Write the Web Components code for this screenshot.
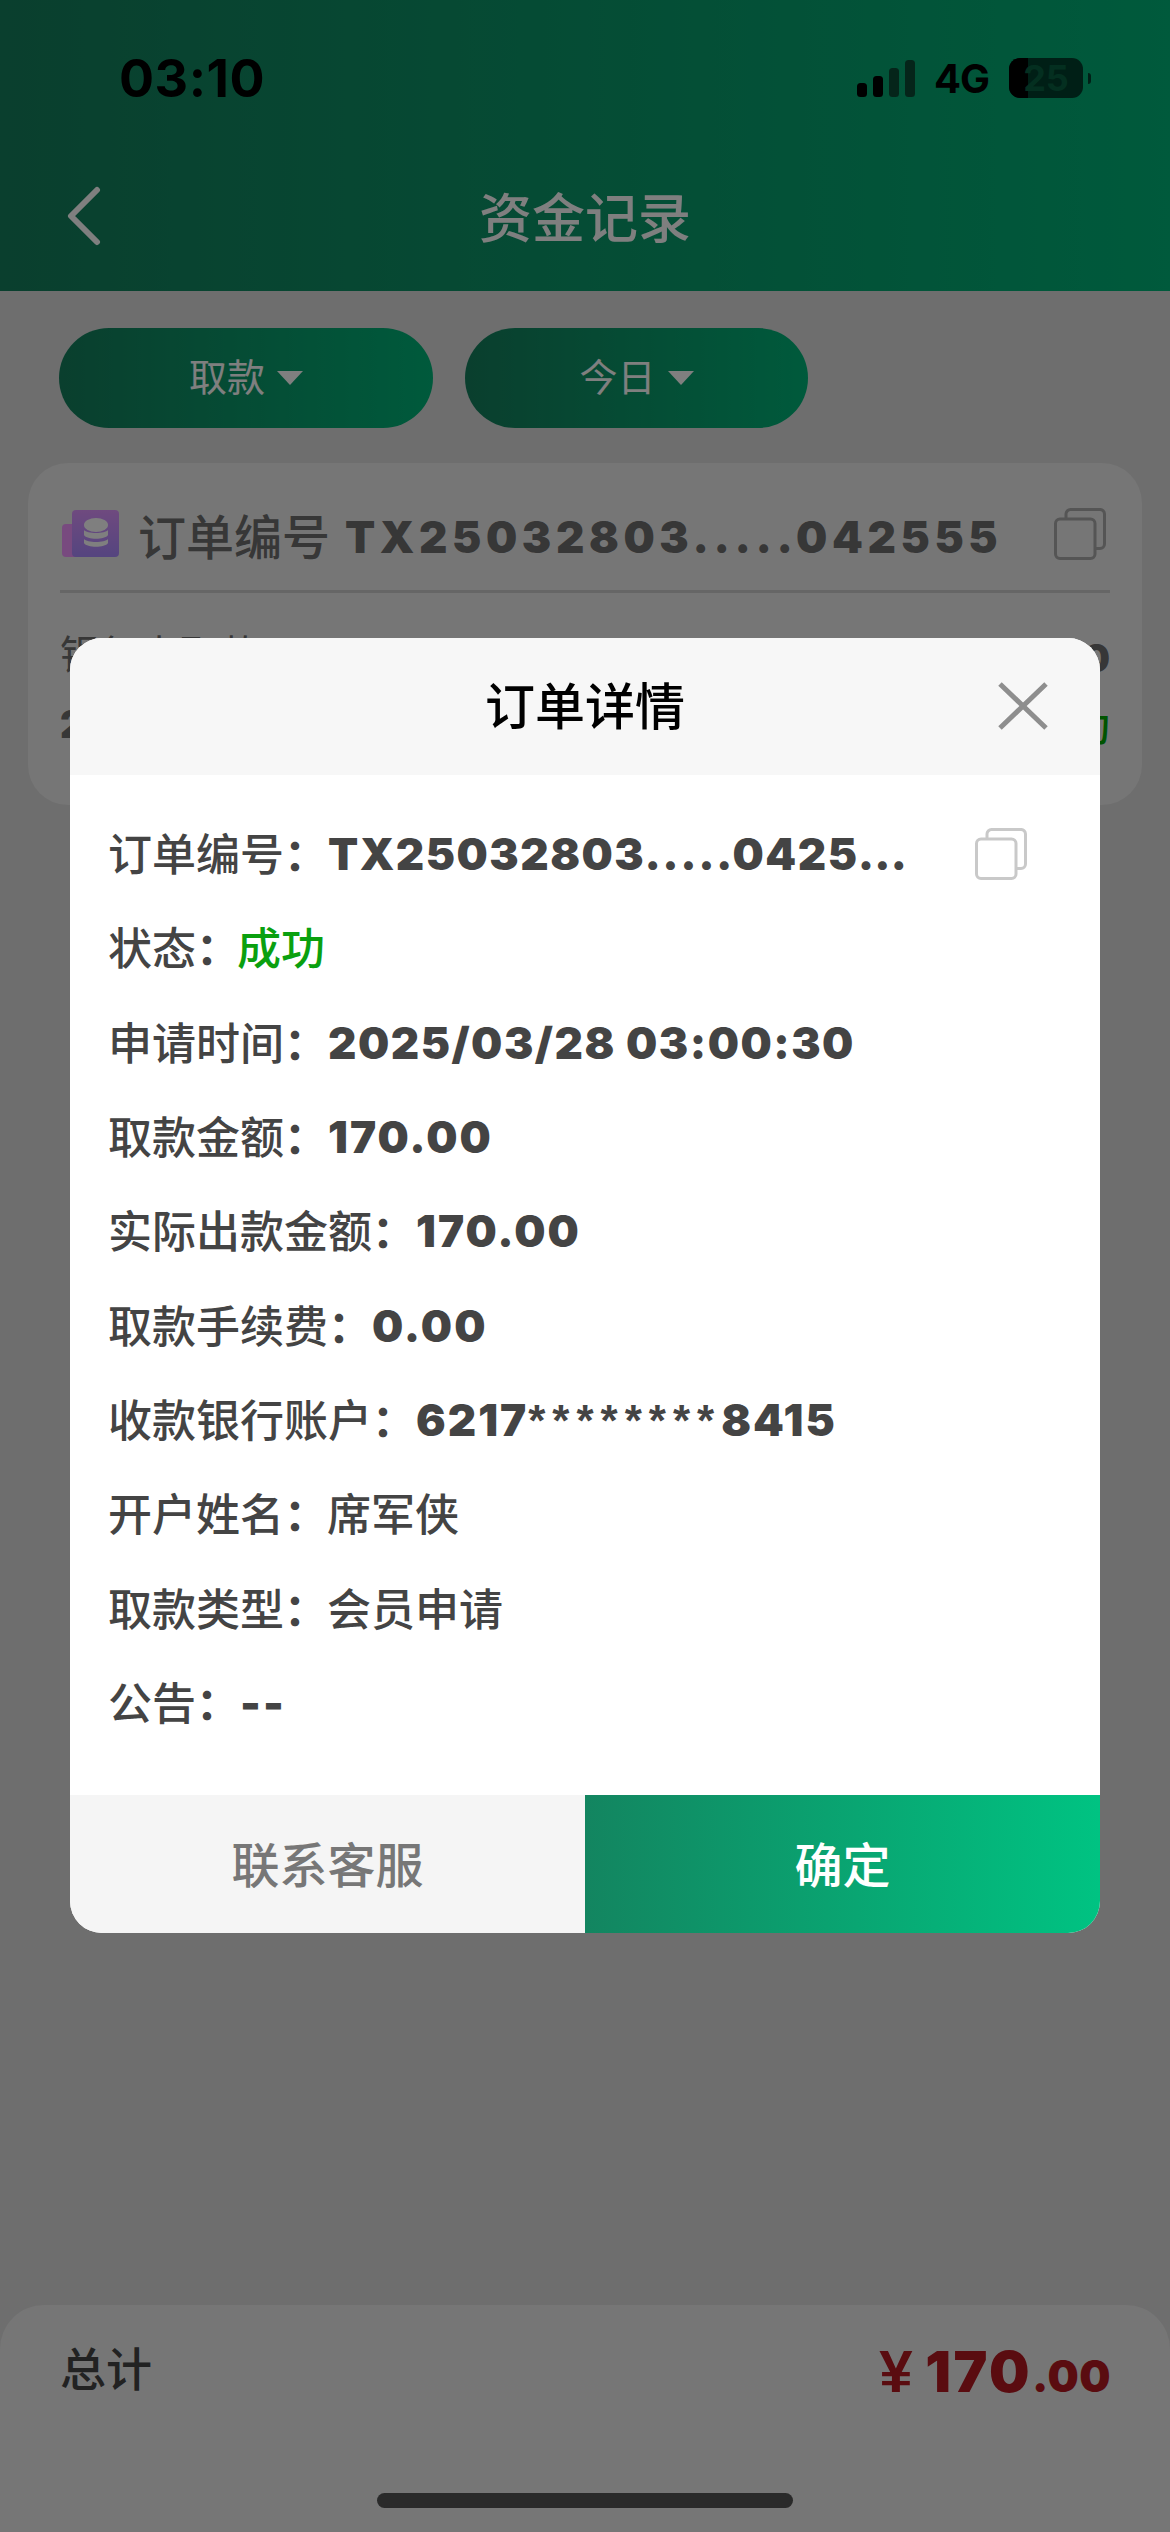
<!DOCTYPE html>
<html lang="zh">
<head>
<meta charset="utf-8">
<title>资金记录</title>
<style>
  html, body { margin: 0; padding: 0; background: #dcdcdc; }
  body { width: 1170px; height: 2532px; font-family: Inter, "Noto Sans CJK SC", sans-serif; }
</style>
</head>
<body>
<x-page>
  <x-statusbar slot="bar"></x-statusbar>
  <x-navbar slot="bar">资金记录</x-navbar>
  <x-filter slot="filters" style="width:374px">取款</x-filter>
  <x-filter slot="filters" style="width:343px">今日</x-filter>
  <x-order-card slot="list"></x-order-card>
  <x-total slot="total"></x-total>
  <x-order-dialog slot="dialog">
    <x-row label="订单编号" value="TX25032803.....0425…" track="1.500" copy></x-row>
    <x-row label="状态" value="成功" kind="ok"></x-row>
    <x-row label="申请时间" value="2025/03/28 03:00:30" track="1.500"></x-row>
    <x-row label="取款金额" value="170.00"></x-row>
    <x-row label="实际出款金额" value="170.00"></x-row>
    <x-row label="取款手续费" value="0.00"></x-row>
    <x-row label="收款银行账户" value="6217********8415"></x-row>
    <x-row label="开户姓名" value="席军侠" kind="plain"></x-row>
    <x-row label="取款类型" value="会员申请" kind="plain"></x-row>
    <x-row label="公告" value="--"></x-row>
  </x-order-dialog>
</x-page>

<script>
const COPY_ICON = (color) => `
  <svg width="52" height="52" viewBox="0 0 52 52" fill="none" stroke="${color}" stroke-width="3">
    <path d="M12 11V6a4.500 4.500 0 0 1 4.500-4.500h29A4.500 4.500 0 0 1 50.500 6v30a4.500 4.500 0 0 1-4.500 4.500h-5"/>
    <rect x="1.500" y="11" width="39.500" height="39.500" rx="4.500"/>
  </svg>`;

class XPage extends HTMLElement {
  constructor() {
    super();
    this.attachShadow({ mode: 'open' });
    this.shadowRoot.innerHTML = `
      <style>
        :host { display: block; position: relative; width: 1170px; height: 2532px; overflow: hidden; background: #dcdcdc; }
        .top { display: block; height: 291px; background: linear-gradient(90deg, #147e5c, #00b478); }
        .filters { display: flex; gap: 32px; padding: 37px 59px 35px; }
        .list { padding: 0 28px; }
        .bottom { position: absolute; left: 0; right: 0; bottom: 0; }
        .scrim { position: absolute; inset: 0; background: rgba(0, 0, 0, .5); }
        .dialog { position: absolute; left: 70px; top: 638px; }
      </style>
      <div class="top"><slot name="bar"></slot></div>
      <div class="filters"><slot name="filters"></slot></div>
      <div class="list"><slot name="list"></slot></div>
      <div class="bottom"><slot name="total"></slot></div>
      <div class="scrim"></div>
      <div class="dialog"><slot name="dialog"></slot></div>`;
  }
}

class XStatusbar extends HTMLElement {
  constructor() {
    super();
    this.attachShadow({ mode: 'open' });
    this.shadowRoot.innerHTML = `
      <style>
        :host { display: flex; align-items: center; justify-content: space-between; height: 156px; padding: 0 79px 0 119px; box-sizing: border-box; color: #000; font-family: Inter, "Liberation Sans", sans-serif; }
        .time { font-size: 52px; font-weight: 700; letter-spacing: .5px; }
        .right { display: flex; align-items: center; }
        .net { font-size: 40px; font-weight: 700; margin: 0 20px 0 19px; letter-spacing: -1px; }
        .battery { position: relative; width: 74px; height: 40px; border-radius: 11px; background: #003f2c; text-align: center; color: #085f41; font-size: 36px; font-weight: 700; line-height: 40px; }
        .battery i { position: absolute; left: 0; top: 0; bottom: 0; width: 19px; background: #000; border-radius: 11px 0 0 11px; }
        .battery span { position: relative; }
        .cap { width: 3px; height: 11px; background: #003f2c; border-radius: 0 4px 4px 0; margin-left: 5px; }
      </style>
      <div class="time">03:10</div>
      <div class="right">
        <svg width="58" height="37" viewBox="0 0 58 37">
          <rect x="0" y="23" width="10" height="14" rx="3.500" fill="#000"/>
          <rect x="16" y="16" width="10" height="21" rx="3.500" fill="#000"/>
          <rect x="32" y="8" width="10" height="29" rx="3.500" fill="#0a4a35"/>
          <rect x="48" y="0" width="10" height="37" rx="3.500" fill="#0a4a35"/>
        </svg>
        <div class="net">4G</div>
        <div class="battery"><i></i><span>25</span></div>
        <div class="cap"></div>
      </div>`;
  }
}

class XNavbar extends HTMLElement {
  constructor() {
    super();
    this.attachShadow({ mode: 'open' });
    this.shadowRoot.innerHTML = `
      <style>
        :host { display: flex; align-items: center; justify-content: center; position: relative; height: 135px; padding-bottom: 18px; box-sizing: border-box; color: #fff; font-size: 53px; font-weight: 500; font-family: "Noto Sans CJK SC", sans-serif; }
        svg { position: absolute; left: 66px; top: 30px; }
      </style>
      <svg width="36" height="60" viewBox="0 0 36 60" fill="none" stroke="#fff" stroke-width="6" stroke-linecap="round" stroke-linejoin="round">
        <path d="M31 4 5 30l26 26"/>
      </svg>
      <slot></slot>`;
  }
}

class XFilter extends HTMLElement {
  constructor() {
    super();
    this.attachShadow({ mode: 'open' });
    this.shadowRoot.innerHTML = `
      <style>
        :host { display: flex; align-items: center; justify-content: center; gap: 12px; height: 100px; box-sizing: border-box; border-radius: 50px; background: linear-gradient(90deg, #147e5c, #00b478); color: #fff; font-size: 38px; font-family: "Noto Sans CJK SC", sans-serif; }
        .text { margin-top: -8px; }
        .arrow { width: 0; height: 0; border-left: 13px solid transparent; border-right: 13px solid transparent; border-top: 14px solid #fff; }
      </style>
      <span class="text"><slot></slot></span><span class="arrow"></span>`;
  }
}

class XOrderCard extends HTMLElement {
  constructor() {
    super();
    this.attachShadow({ mode: 'open' });
    this.shadowRoot.innerHTML = `
      <style>
        :host { display: block; height: 342px; box-sizing: border-box; background: #ececec; border-radius: 40px; padding: 0 32px; color: #6e6e6e; font-family: "Noto Sans CJK SC", sans-serif; }
        .head { display: flex; align-items: center; height: 130px; padding-top: 14px; box-sizing: border-box; border-bottom: 3px solid #ccc; }
        .logo { margin: 0 18px 0 2px; }
        .label { font-size: 48px; font-weight: 500; margin-top: 0; }
        .no { font-family: Inter, sans-serif; font-size: 44px; font-weight: 900; letter-spacing: 4.600px; margin-left: 15px; margin-top: 6px; flex: 1; }
        .copy { margin-right: 4px; display: flex; }
        .sub { display: flex; justify-content: space-between; font-size: 40px; padding-top: 30px; }
        .amount { margin-top: 12px; }
        .amount, .date { font-family: Inter, sans-serif; font-weight: 900; font-size: 38px; }
        .sub2 { display: flex; justify-content: space-between; align-items: center; padding-top: 14px; }
        .ok { color: #00a800; font-size: 40px; font-weight: 500; }
      </style>
      <div class="head">
        <svg class="logo" width="58" height="47" viewBox="0 0 58 47">
          <rect x="0" y="14" width="26" height="33" rx="4" fill="#f094ff"/>
          <defs><linearGradient id="g" x1="0" y1="0" x2="0" y2="1"><stop offset="0" stop-color="#de94ff"/><stop offset="1" stop-color="#aa8aff"/></linearGradient></defs>
          <rect x="10" y="0" width="47" height="47" rx="4" fill="url(#g)"/>
          <g fill="#fff">
            <ellipse cx="34" cy="15" rx="12" ry="7"/>
            <path d="M22 20c3 4 21 4 24 0v5c-3 5-21 5-24 0zM22 29c3 4 21 4 24 0v4c-3 5-21 5-24 0z"/>
          </g>
        </svg>
        <span class="label">订单编号</span>
        <span class="no">TX25032803.....042555</span>
        <span class="copy">${COPY_ICON('#aaa')}</span>
      </div>
      <div class="sub"><span>银行卡取款</span><span class="amount">170.00</span></div>
      <div class="sub2"><span class="date">2025/03/28 03:00:30</span><span class="ok">成功</span></div>`;
  }
}

class XTotal extends HTMLElement {
  constructor() {
    super();
    this.attachShadow({ mode: 'open' });
    this.shadowRoot.innerHTML = `
      <style>
        :host { display: flex; justify-content: space-between; align-items: flex-start; position: relative; height: 227px; box-sizing: border-box; padding: 31px 59px 31px 60px; background: #ececec; border-radius: 44px 44px 0 0; font-family: "Noto Sans CJK SC", sans-serif; }
        .label { font-size: 46px; color: #444; font-weight: 500; line-height: 60px; }
        .sum { color: #b41820; font-family: Inter, sans-serif; font-weight: 900; font-size: 57px; line-height: 60px; letter-spacing: 2.500px; display: flex; align-items: baseline; margin-top: 6px; }
        .yen { font-family: "Liberation Sans", sans-serif; font-size: 60px; font-weight: 700; margin-right: 10px; }
        .dec { font-size: 44px; letter-spacing: .5px; }
        .home { position: absolute; left: 377px; top: 188px; width: 416px; height: 15px; border-radius: 8px; background: #545454; }
      </style>
      <span class="label">总计</span>
      <span class="sum"><span class="yen">¥</span>170<span class="dec">.00</span></span>
      <div class="home"></div>`;
  }
}

class XRow extends HTMLElement {
  constructor() {
    super();
    this.attachShadow({ mode: 'open' });
  }
  connectedCallback() {
    const kind = this.getAttribute('kind') || '';
    const track = this.getAttribute('track') || '2';
    const copy = this.hasAttribute('copy') ? `<span class="copy">${COPY_ICON('#c9c9c9')}</span>` : '';
    const value = this.getAttribute('value').replace(/\*+/, '<span class="stars">$&</span>');
    this.shadowRoot.innerHTML = `
      <style>
        :host { display: flex; align-items: center; height: 94.3px; color: #444; font-size: 44px; font-weight: 500; font-family: "Noto Sans CJK SC", sans-serif; position: relative; }
        .label { margin-top: -4px; }
        .colon { font-family: "Noto Sans CJK TC", sans-serif; font-weight: 700; }
        .val { font-family: Inter, "Noto Sans CJK SC", sans-serif; font-weight: 900; letter-spacing: ${track}px; }
        .val.ok, .val.plain { font-family: "Noto Sans CJK SC", sans-serif; font-weight: 500; letter-spacing: 0; margin-top: -4px; }
        .val.ok { color: #0aa00f; margin-left: -3px; }
        .val.plain { margin-left: -1px; }
        .stars { font-family: "Liberation Sans", sans-serif; font-weight: 700; letter-spacing: 7px; }
        .copy { position: absolute; left: 867px; top: 21px; display: flex; }
      </style>
      <span class="label">${this.getAttribute('label')}<span class="colon">：</span></span><span class="val ${kind}">${value}</span>${copy}`;
  }
}

class XOrderDialog extends HTMLElement {
  constructor() {
    super();
    this.attachShadow({ mode: 'open' });
    this.shadowRoot.innerHTML = `
      <style>
        :host { display: block; width: 1030px; height: 1295px; background: #fff; border-radius: 32px; overflow: hidden; font-family: "Noto Sans CJK SC", sans-serif; }
        .head { display: flex; align-items: center; justify-content: center; position: relative; height: 137px; padding-bottom: 8px; box-sizing: border-box; background: #f7f7f7; font-size: 50px; font-weight: 500; color: #000; }
        .head svg { position: absolute; right: 52px; top: 43px; }
        .rows { display: block; height: 1020px; box-sizing: border-box; padding: 32px 38px 0; }
        .foot { display: flex; height: 138px; font-size: 48px; font-weight: 500; }
        .foot div { flex: 1; display: flex; align-items: center; justify-content: center; padding-bottom: 4px; }
        .cancel { background: #f5f5f5; color: #777; }
        .ok { background: linear-gradient(90deg, #138560, #00c382); color: #fff; }
      </style>
      <div class="head">订单详情
        <svg width="50" height="50" viewBox="0 0 50 50" stroke="#8e8e8e" stroke-width="5" fill="none"><path d="M2 3l46 44M48 3 2 47"/></svg>
      </div>
      <div class="rows"><slot></slot></div>
      <div class="foot"><div class="cancel">联系客服</div><div class="ok">确定</div></div>`;
  }
}

customElements.define('x-page', XPage);
customElements.define('x-statusbar', XStatusbar);
customElements.define('x-navbar', XNavbar);
customElements.define('x-filter', XFilter);
customElements.define('x-order-card', XOrderCard);
customElements.define('x-total', XTotal);
customElements.define('x-row', XRow);
customElements.define('x-order-dialog', XOrderDialog);
</script>
</body>
</html>
